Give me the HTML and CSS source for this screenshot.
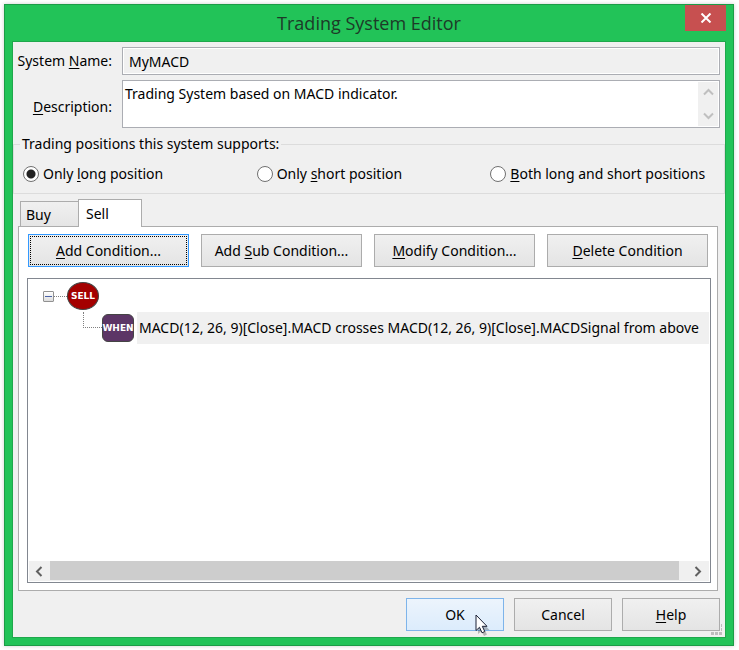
FILE: index.html
```html
<!DOCTYPE html>
<html lang="en">
<head>
    <meta charset="UTF-8">
    <meta name="viewport" content="width=device-width, initial-scale=1.0">
    <title>Trading System Editor</title>
    <link rel="stylesheet" href="styles.css">
</head>
<body>
    <div class="window">
        <header class="titlebar">
            <h1>Trading System Editor</h1>
            <button type="button" class="close" aria-label="Close">
                <svg width="12" height="10" viewBox="0 0 12 10"><path d="M1.5 0.5 L10.5 9.5 M10.5 0.5 L1.5 9.5" stroke="#fff" stroke-width="2" fill="none"/></svg>
            </button>
        </header>

        <form class="client">
            <div class="fields">
                <label for="name">System <u>N</u>ame:</label>
                <input type="text" id="name" class="name" value="MyMACD" readonly>

                <label for="description" class="low"><u>D</u>escription:</label>
                <div class="memo">
                    <textarea id="description">Trading System based on MACD indicator.</textarea>
                    <div class="vscroll">
                        <svg width="11" height="8" viewBox="0 0 11 8"><path d="M1 6.5 L5.5 2 L10 6.5" stroke="#bfbfbf" stroke-width="2" fill="none"/></svg>
                        <svg width="11" height="8" viewBox="0 0 11 8"><path d="M1 1.5 L5.5 6 L10 1.5" stroke="#bfbfbf" stroke-width="2" fill="none"/></svg>
                    </div>
                </div>
            </div>

            <fieldset class="positions">
                <legend>Trading positions this system supports:</legend>
                <label><input type="radio" name="position" checked> <span>Only <u>l</u>ong position</span></label>
                <label><input type="radio" name="position"> <span>Only <u>s</u>hort position</span></label>
                <label><input type="radio" name="position"> <span><u>B</u>oth long and short positions</span></label>
            </fieldset>

            <div class="tabs">
                <button type="button" class="tab">Buy</button>
                <button type="button" class="tab active">Sell</button>
            </div>

            <section class="panel">
                <div class="toolbar">
                    <button type="button" class="btn focused"><span><u>A</u>dd Condition...</span></button>
                    <button type="button" class="btn"><span>Add <u>S</u>ub Condition...</span></button>
                    <button type="button" class="btn"><span><u>M</u>odify Condition...</span></button>
                    <button type="button" class="btn"><span><u>D</u>elete Condition</span></button>
                </div>

                <div class="tree">
                    <div class="nodes">
                        <div class="node">
                            <button type="button" class="toggle" aria-label="Collapse"></button>
                            <span class="line"></span>
                            <span class="sell">SELL</span>
                        </div>
                        <div class="node child">
                            <span class="elbow"></span>
                            <span class="when">WHEN</span>
                            <span class="text">MACD(12, 26, 9)[Close].MACD crosses MACD(12, 26, 9)[Close].MACDSignal from above</span>
                        </div>
                    </div>
                    <div class="hscroll">
                        <svg width="8" height="11" viewBox="0 0 8 11"><path d="M6.5 1 L2 5.5 L6.5 10" stroke="#606060" stroke-width="2" fill="none"/></svg>
                        <div class="thumb"></div>
                        <svg width="8" height="11" viewBox="0 0 8 11"><path d="M1.5 1 L6 5.5 L1.5 10" stroke="#606060" stroke-width="2" fill="none"/></svg>
                    </div>
                </div>
            </section>

            <footer class="actions">
                <button type="button" class="btn hover">
                    <span>OK</span>
                    <svg class="cursor" width="16" height="22" viewBox="0 0 16 22"><path d="M3 4 V20 L6.500 17 L9 22 L12 20.500 L9.500 16 H14.500 Z" fill="#000" opacity=".25"/><path d="M1 1 V16.500 L4.500 13.300 L7 18.800 L9.800 17.500 L7.300 12.300 H12 Z" fill="#fff" stroke="#1b2136"/></svg>
                </button>
                <button type="button" class="btn"><span>Cancel</span></button>
                <button type="button" class="btn"><span><u>H</u>elp</span></button>
            </footer>
            <svg class="grip" width="11" height="11" viewBox="0 0 11 11"><path d="M0 8h3v3h-3zM4 8h3v3h-3zM8 8h3v3h-3zM10 4h1v3h-1zM10 0h1v3h-1z" fill="#bdbdbd"/></svg>
        </form>
    </div>
</body>
</html>
```
FILE: styles.css
```css
* {
    box-sizing: border-box;
}
body {
    margin: 0;
    padding: 4px 5px 4px 4px;
    min-height: 100vh;
    display: flex;
    background-color: #fff;
    font-family: "Noto Sans", "Open Sans", sans-serif;
    font-size: 14px;
    line-height: 20px;
    color: #000;
}
button, input, textarea {
    font: inherit;
    color: inherit;
    margin: 0;
}
u {
    text-underline-offset: 2px;
}
.window {
    flex: 1;
    min-width: 0;
    display: flex;
    flex-direction: column;
    padding: 0 7px 7px;
    background-color: #22c358;
    border: 1px solid #1c9c47;
    box-shadow: 0 0 4px rgba(0,0,0,0.2);
}
.titlebar {
    position: relative;
    height: 36px;
}
.titlebar h1 {
    margin: 0;
    font-family: "Open Sans", sans-serif;
    font-size: 18px;
    font-weight: normal;
    line-height: 36px;
    text-align: center;
    color: #1d3a28;
}
.close {
    position: absolute;
    top: 0;
    right: 0;
    width: 41px;
    height: 26px;
    padding: 0;
    border: none;
    background-color: #c75050;
}
.client {
    position: relative;
    flex: 1;
    display: flex;
    flex-direction: column;
    background-color: #f0f0f0;
    border: 1px solid #1fa84c;
}

/* Name and description */
.fields {
    display: grid;
    grid-template-columns: 99px 1fr;
    column-gap: 10px;
    row-gap: 5px;
    align-items: center;
    padding: 5px 5px 0 0;
}
.fields label {
    text-align: right;
    white-space: nowrap;
}
.fields .low {
    padding-top: 5px;
}
.name {
    width: 100%;
    height: 28px;
    padding: 0 6px;
    border: 1px solid #abadb3;
    box-shadow: inset 0 0 0 1px #fff;
    background-color: #f0f0f0;
}
.memo {
    display: flex;
    height: 48px;
    padding: 1px;
    border: 1px solid #abadb3;
    background-color: #fff;
}
.memo textarea {
    flex: 1;
    padding: 2px 1px;
    border: none;
    outline: none;
    resize: none;
    overflow: hidden;
    background-color: #fff;
}
.vscroll {
    width: 20px;
    display: flex;
    flex-direction: column;
    align-items: center;
    justify-content: space-between;
    padding: 6px 0;
    background-color: #f0f0f0;
}

/* Positions group */
.positions {
    display: grid;
    grid-template-columns: repeat(3, 1fr);
    height: 60px;
    margin: 6px 0 0;
    padding: 10px 0 0 9px;
    border: 1px solid #dcdcdc;
}
.positions legend {
    height: 20px;
    margin-left: -3px;
    padding: 0 2px;
}
.positions label {
    display: flex;
    gap: 4px;
    height: 20px;
    align-items: center;
    white-space: nowrap;
}
.positions input {
    appearance: none;
    width: 16px;
    height: 16px;
    border: 1px solid #707070;
    border-radius: 50%;
    background-color: #fff;
}
.positions input:checked {
    background-image: radial-gradient(circle, #222 4px, #fff 5px);
}

/* Tabs */
.tabs {
    position: relative;
    z-index: 1;
    display: flex;
    align-items: flex-end;
    height: 28px;
    margin: 5px 7px -1px;
}
.tab {
    width: 58px;
    height: 26px;
    padding: 2px 5px 0;
    text-align: left;
    border: 1px solid #acacac;
    border-right: none;
    background: linear-gradient(#f0f0f0, #e5e5e5);
}
.tab.active {
    width: 64px;
    height: 28px;
    padding: 0 7px;
    border-right: 1px solid #acacac;
    border-bottom: none;
    background: #fff;
}
.panel {
    flex: 1;
    display: flex;
    flex-direction: column;
    gap: 11px;
    margin: 0 7px 0 5px;
    padding: 7px 6px 7px 8px;
    border: 1px solid #acacac;
    background-color: #fff;
}
.toolbar {
    display: grid;
    grid-template-columns: repeat(4, 1fr);
    gap: 12px;
    padding: 0 3px 0 1px;
}
.btn {
    position: relative;
    height: 33px;
    padding: 0;
    border: 1px solid #acacac;
    background: linear-gradient(#f0f0f0, #e4e4e4);
    white-space: nowrap;
}
.btn.focused {
    border-color: #3399ff;
    outline: 1px dotted #000;
    outline-offset: -3px;
}
.btn.hover {
    border-color: #7eb4ea;
    background: linear-gradient(#ecf4fc, #dcecfc);
}

/* Condition tree */
.tree {
    flex: 1;
    display: flex;
    flex-direction: column;
    padding: 1px;
    border: 1px solid #828790;
}
.nodes {
    flex: 1;
    min-width: 0;
    overflow: hidden;
}
.node {
    display: flex;
    align-items: center;
    height: 32px;
    padding-left: 14px;
}
.toggle {
    width: 11px;
    height: 11px;
    padding: 4px 1px;
    border: 1px solid #919191;
    border-radius: 1px;
    background: linear-gradient(#4b63a7, #4b63a7) content-box, linear-gradient(#fff, #ddd);
}
.line {
    width: 13px;
    border-top: 1px dotted #808080;
}
.sell, .when {
    flex: none;
    width: 32px;
    height: 28px;
    display: flex;
    align-items: center;
    justify-content: center;
    border: 1px solid #444;
    border-radius: 50%;
    background-color: #a40000;
    color: #fff;
    font-size: 9px;
    font-weight: bold;
    font-family: "DejaVu Sans", sans-serif;
}
.when {
    border-radius: 6px;
    background-color: #5c3566;
}
.child {
    padding-left: 54px;
}
.elbow {
    flex: none;
    width: 19px;
    height: 16px;
    margin-bottom: 16px;
    border-left: 1px dotted #808080;
    border-bottom: 1px dotted #808080;
}
.text {
    flex: 1;
    margin-left: 3px;
    padding-left: 2px;
    line-height: 32px;
    white-space: nowrap;
    overflow: hidden;
    background-color: #f0f0f0;
}
.hscroll {
    display: flex;
    align-items: center;
    gap: 7px;
    height: 20px;
    padding: 0 7px 0 6px;
    background-color: #f0f0f0;
}
.thumb {
    flex: 1;
    height: 19px;
    margin: 0 8px 1px 0;
    background-color: #cdcdcd;
}

/* Bottom buttons */
.actions {
    display: flex;
    justify-content: flex-end;
    gap: 10px;
    padding: 7px 5px 6px;
}
.actions .btn {
    width: 98px;
}
.cursor {
    position: absolute;
    left: 68px;
    top: 15px;
}
.grip {
    position: absolute;
    right: 3px;
    bottom: 2px;
}
```
